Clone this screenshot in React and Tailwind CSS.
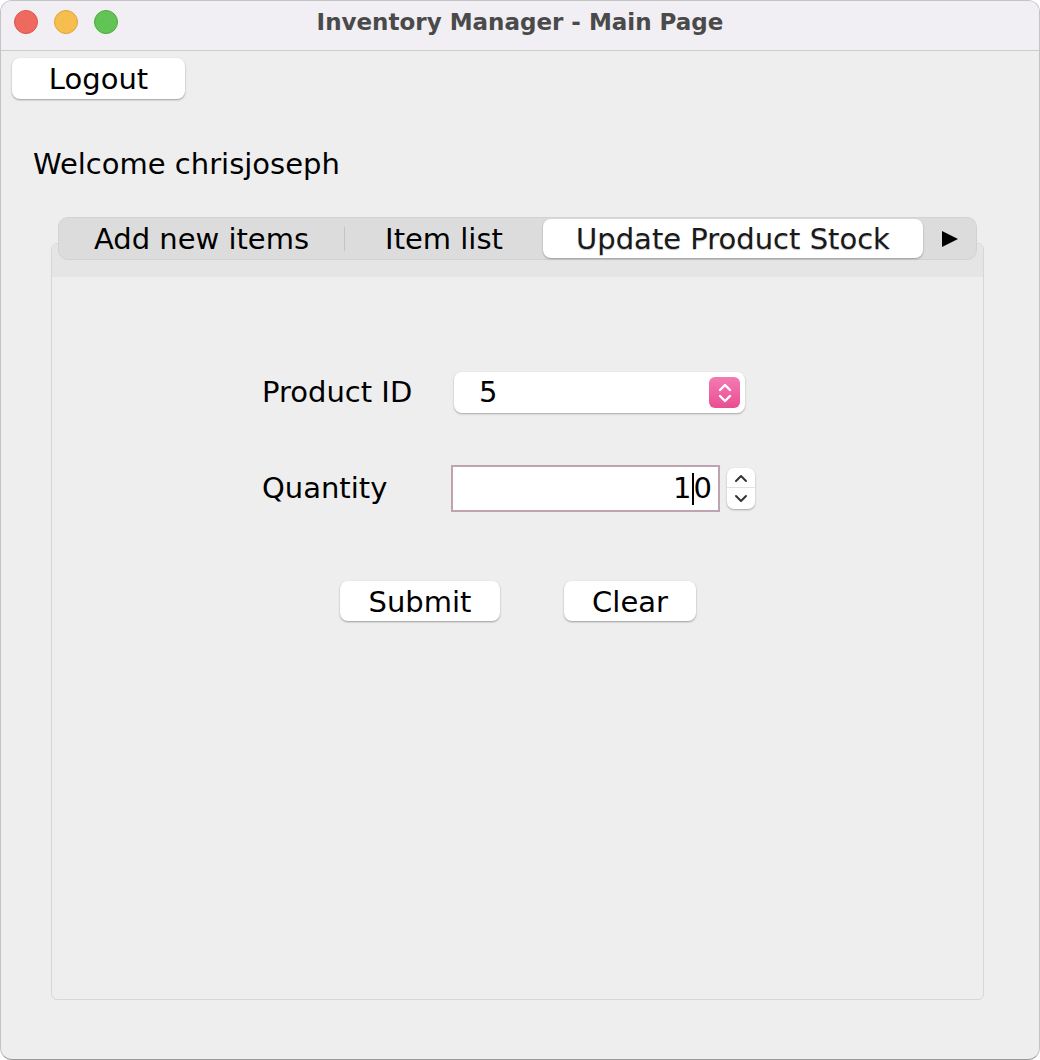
export default function App() {
  return (
    <div className="w-[1040px] h-[1060px] bg-white" style={{ fontFamily: '"DejaVu Sans", "Liberation Sans", sans-serif' }}>
      <div className="w-[1040px] h-[1060px] rounded-[12px] overflow-hidden bg-[#eeeeee] border border-[#c4c4c4] border-b-[#9a9a9a] flex flex-col">
        {/* barra de título */}
        <div className="h-[50px] shrink-0 bg-[#f1eff4] border-b border-[#cdcdcd] flex items-center pb-[7px] relative">
          <div className="flex items-center gap-[16px] pl-[13px]">
            <span className="w-[24px] h-[24px] rounded-full bg-[#ee6a5f] border border-[#d9574d]"></span>
            <span className="w-[24px] h-[24px] rounded-full bg-[#f5be4f] border border-[#dca53c]"></span>
            <span className="w-[24px] h-[24px] rounded-full bg-[#61c454] border border-[#4faa43]"></span>
          </div>
          <div className="absolute inset-0 pb-[7px] flex items-center justify-center text-[23px] font-bold text-[#4a4a4a] pointer-events-none">
            Inventory Manager - Main Page
          </div>
        </div>

        {/* corpo */}
        <div className="pl-[11px] pt-[7px]">
          <button className="w-[173px] h-[41px] bg-white rounded-[8px] shadow-[0_1px_2px_rgba(0,0,0,0.35)] text-[29px] text-black">
            Logout
          </button>
        </div>

        <div className="pl-[32px] mt-[49px] h-[34px] flex items-center text-[29px] text-black">
          Welcome chrisjoseph
        </div>

        {/* painel de abas */}
        <div className="mt-[35px] ml-[50px] w-[933px] flex flex-col">
          <div className="relative z-10 ml-[7px] w-[919px] h-[43px] rounded-[10px] bg-[#dcdcdc] border border-[#d2d2d2] flex items-center text-[29px] text-black">
            <div className="w-[285px] flex justify-center pt-[3px]">Add new items</div>
            <div className="w-[1px] h-[24px] bg-[#c4c4c4]"></div>
            <div className="w-[198px] flex justify-center pt-[3px]">Item list</div>
            <div className="w-[380px] h-[39px] pt-[3px] bg-white rounded-[8px] shadow-[0_1px_2px_rgba(0,0,0,0.3)] flex items-center justify-center text-[#1a1a1a] [text-shadow:0_1px_1px_rgba(0,0,0,0.25)]">
              Update Product Stock
            </div>
            <div className="flex-1 flex justify-center">
              <svg width="18" height="18" viewBox="0 0 18 18"><path d="M1 1 L17 9 L1 17 Z" fill="#000" /></svg>
            </div>
          </div>

          <div className="-mt-[17px] h-[757px] rounded-[6px] border border-[#d7d7d7] bg-[#eeeeee] flex flex-col">
            <div className="h-[33px] shrink-0 bg-[#e5e5e5] rounded-t-[6px]"></div>

            <div className="pl-[210px] pt-[95px] flex flex-col">
              <div className="flex items-center h-[41px]">
                <div className="w-[192px] text-[29px] text-black">Product ID</div>
                <div className="w-[291px] h-[41px] bg-white rounded-[8px] shadow-[0_1px_2px_rgba(0,0,0,0.3)] flex items-center justify-between pl-[25px] pr-[5px]">
                  <span className="text-[29px] text-black">5</span>
                  <span className="w-[31px] h-[31px] rounded-[6px] bg-gradient-to-b from-[#f47ab4] to-[#ea4c92] flex items-center justify-center">
                    <svg width="16" height="22" viewBox="0 0 16 22" fill="none" stroke="#fff" strokeWidth="2.4" strokeLinecap="round" strokeLinejoin="round">
                      <path d="M3 8 L8 3 L13 8" />
                      <path d="M3 14 L8 19 L13 14" />
                    </svg>
                  </span>
                </div>
              </div>

              <div className="flex items-center h-[47px] mt-[52px]">
                <div className="w-[189px] text-[29px] text-black">Quantity</div>
                <div className="w-[269px] h-[47px] bg-white border-2 border-[#bfa3b0] flex items-center justify-end pr-[6px] text-[29px] text-black">
                  <span>1</span>
                  <span className="w-[2px] h-[32px] bg-black"></span>
                  <span>0</span>
                </div>
                <div className="ml-[7px] w-[28px] h-[41px] bg-white rounded-[7px] shadow-[0_1px_2px_rgba(0,0,0,0.3)] flex flex-col">
                  <div className="h-[20px] flex items-center justify-center border-b border-[#e2e2e2]">
                    <svg width="14" height="10" viewBox="0 0 14 10" fill="none" stroke="#333" strokeWidth="2" strokeLinecap="round" strokeLinejoin="round"><path d="M2 8 L7 3 L12 8" /></svg>
                  </div>
                  <div className="flex-1 flex items-center justify-center">
                    <svg width="14" height="10" viewBox="0 0 14 10" fill="none" stroke="#333" strokeWidth="2" strokeLinecap="round" strokeLinejoin="round"><path d="M2 2 L7 7 L12 2" /></svg>
                  </div>
                </div>
              </div>

              <div className="flex mt-[69px] ml-[78px] gap-[64px]">
                <button className="w-[160px] h-[40px] bg-white rounded-[8px] shadow-[0_1px_2px_rgba(0,0,0,0.35)] text-[29px] text-black">Submit</button>
                <button className="w-[132px] h-[40px] bg-white rounded-[8px] shadow-[0_1px_2px_rgba(0,0,0,0.35)] text-[29px] text-black">Clear</button>
              </div>
            </div>
          </div>
        </div>
      </div>
    </div>
  );
}
